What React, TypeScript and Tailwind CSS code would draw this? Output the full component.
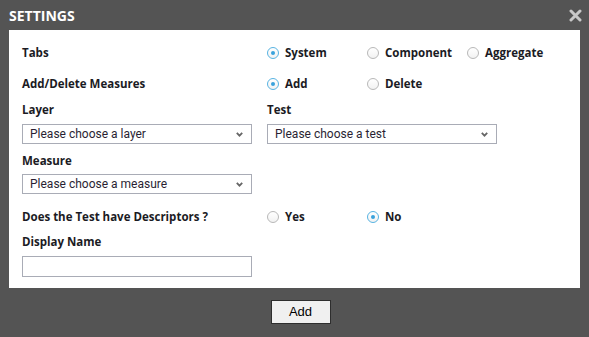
import React from 'react';

const font = { fontFamily: '"Open Sans", "DejaVu Sans", sans-serif' };

function Radio({ label, checked }: { label: string; checked?: boolean }) {
  return (
    <label className="flex items-center gap-[6px] w-[100px] text-[11.5px] font-bold text-[#1b1b24]">
      <span
        className={
          'w-[12px] h-[12px] rounded-full border flex items-center justify-center bg-gradient-to-b from-white to-[#f2f2f2] ' +
          (checked ? 'border-[#57b3e2]' : 'border-[#b8b8b8]')
        }
      >
        {checked && <span className="w-[4px] h-[4px] rounded-full bg-[#3aa2dc]" />}
      </span>
      {label}
    </label>
  );
}

function Select({ text }: { text: string }) {
  return (
    <div
      className="w-[230px] h-[20px] border border-[#a9acb6] bg-white flex items-center justify-between pl-[7px] pr-[8px] text-[12px] text-[#2a1f33]"
      style={{ fontFamily: 'Roboto, "Open Sans", sans-serif' }}
    >
      <span>{text}</span>
      <svg width="7" height="5" viewBox="0 0 7 5">
        <path d="M0.8 0.8 L3.5 3.6 L6.2 0.8" fill="none" stroke="#666" strokeWidth="1.8" />
      </svg>
    </div>
  );
}

export default function App() {
  return (
    <div className="w-[589px] h-[337px] bg-[#545454] flex flex-col" style={font}>
      <div className="h-[30px] flex items-center justify-between pl-[9px] pr-[7px]">
        <span className="text-white font-bold text-[14px]">SETTINGS</span>
        <svg width="13" height="13" viewBox="0 0 13 13">
          <path d="M2 2 L11 11 M11 2 L2 11" stroke="#c9c9c9" strokeWidth="3" strokeLinecap="round" />
        </svg>
      </div>

      <div className="mx-[9px] h-[258px] bg-white pl-[13px] flex flex-col">
        <div className="mt-[13px] h-[20px] flex items-center">
          <div className="w-[245px] text-[11.5px] font-bold text-[#1b1b24]">Tabs</div>
          <Radio label="System" checked />
          <Radio label="Component" />
          <Radio label="Aggregate" />
        </div>

        <div className="mt-[11px] h-[20px] flex items-center">
          <div className="w-[245px] text-[11.5px] font-bold text-[#1b1b24]">Add/Delete Measures</div>
          <Radio label="Add" checked />
          <Radio label="Delete" />
        </div>

        <div className="mt-[8px] h-[16px] flex items-center text-[11.5px] font-bold text-[#1b1b24]">
          <div className="w-[245px]">Layer</div>
          <div>Test</div>
        </div>

        <div className="mt-[6px] flex gap-[15px]">
          <Select text="Please choose a layer" />
          <Select text="Please choose a test" />
        </div>

        <div className="mt-[9px] h-[16px] flex items-center text-[11.5px] font-bold text-[#1b1b24]">Measure</div>

        <div className="mt-[5px]">
          <Select text="Please choose a measure" />
        </div>

        <div className="mt-[13px] h-[20px] flex items-center">
          <div className="w-[245px] text-[11.5px] font-bold text-[#1b1b24]">Does the Test have Descriptors ?</div>
          <Radio label="Yes" />
          <Radio label="No" checked />
        </div>

        <div className="mt-[7px] h-[16px] flex items-center text-[11.5px] font-bold text-[#1b1b24]">Display Name</div>

        <input className="mt-[6px] w-[230px] h-[21px] border border-[#a9acb6] outline-none" />
      </div>

      <div className="flex justify-center pl-[12px] mt-[12px]">
        <button
          className="w-[60px] h-[24px] bg-[#f0f0f0] border border-[#2e2e2e] text-[13px] text-black"
          style={{ fontFamily: '"Liberation Sans", Arial, sans-serif' }}
        >
          Add
        </button>
      </div>
    </div>
  );
}
